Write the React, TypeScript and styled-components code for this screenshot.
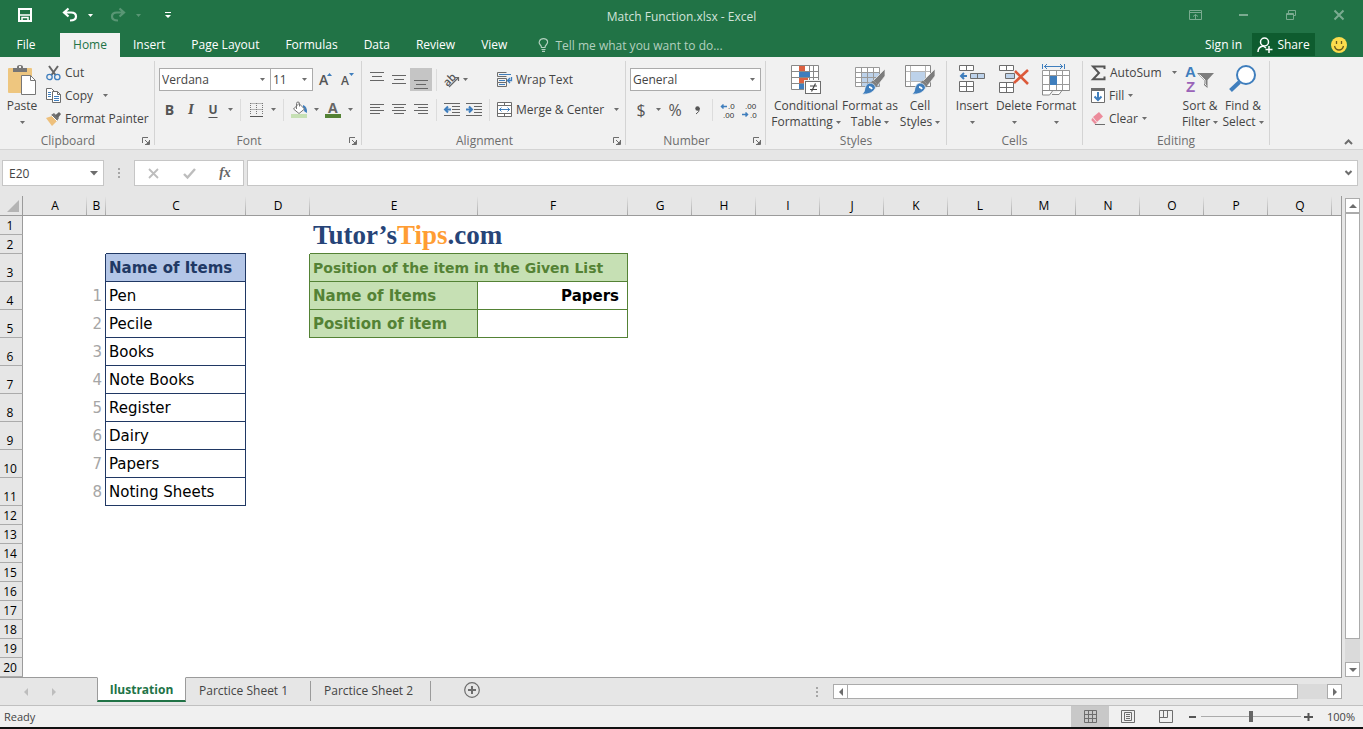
import React from "react";
import styled, { createGlobalStyle, css } from "styled-components";

const ui = `"Open Sans", "Noto Sans", sans-serif`;
const sheetFont = `"DejaVu Sans", Verdana, sans-serif`;
const c = {
  green: "#217346",
  ribbon: "#f1f1f1",
  frame: "#e6e6e6",
  line: "#d4d4d4",
  grey: "#6d6d6d",
  text: "#444444",
  edge: "#9b9b9b",
  box: "#ababab",
  blue: "#3f7ebd",
  navy: "#203864",
  leaf: "#548235",
};

const Global = createGlobalStyle`
  *, *::before, *::after { box-sizing: border-box; }
  body { margin: 0; background: ${c.frame}; font-family: ${ui}; font-size: 12px; color: ${c.text}; }
  button, input, select { font: inherit; color: inherit; margin: 0; padding: 0; border: 0; background: none; border-radius: 0; outline: 0; }
  svg { display: block; flex: none; overflow: visible; }
  h1, h2 { margin: 0; font: inherit; }
`;

const Page = styled.div`
  display: flex;
  flex-direction: column;
  min-height: 100vh;
`;

/* ---------- title bar and tabs ---------- */
const TitleBar = styled.header`
  display: grid;
  grid-template-columns: 1fr auto 1fr;
  height: 33px;
  background: ${c.green};
  color: #fff;
`;
const QuickAccess = styled.div`
  display: flex;
  align-items: center;
  height: 30px;
  padding-left: 14px;
`;
const QuickButton = styled.button<{ $w: number; $dim?: boolean }>`
  display: flex;
  align-items: center;
  justify-content: center;
  width: ${(p) => p.$w}px;
  height: 24px;
  opacity: ${(p) => (p.$dim ? 0.25 : 1)};
`;
const Gap = styled.span<{ $w: number }>`
  width: ${(p) => p.$w}px;
  flex: none;
`;
const DocTitle = styled.h1`
  line-height: 33px;
  color: #d3e3da;
`;
const WindowButtons = styled.div`
  display: flex;
  justify-content: flex-end;
`;
const WindowButton = styled.button`
  display: flex;
  align-items: center;
  justify-content: center;
  width: 48px;
  height: 30px;
  opacity: 0.4;
`;
const TabBar = styled.nav`
  display: flex;
  height: 24px;
  background: ${c.green};
  color: #fff;
`;
const Tab = styled.button<{ $on?: boolean; $file?: boolean }>`
  padding: 0 13px;
  line-height: 24px;
  white-space: nowrap;
  ${(p) => p.$file && css`width: 60px; padding: 0 8px 0 0;`}
  ${(p) => p.$on && css`width: 60px; padding: 0; background: ${c.ribbon}; color: ${c.green};`}
`;
const TellMe = styled.label`
  display: flex;
  align-items: center;
  gap: 6px;
  flex: 1;
  padding-left: 18px;
  color: #b3d0bf;
  input { width: 200px; height: 24px; }
  input::placeholder { color: #b3d0bf; opacity: 1; }
`;
const SignIn = styled.a`
  padding: 0 10px;
  line-height: 24px;
  color: #fff;
  text-decoration: none;
`;
const Share = styled.button`
  display: flex;
  align-items: center;
  justify-content: center;
  gap: 4px;
  width: 63px;
  height: 23px;
  background: #0e5c2f;
`;
const Smile = styled.button`
  display: flex;
  align-items: center;
  justify-content: center;
  width: 48px;
  height: 24px;
`;

/* ---------- ribbon ---------- */
const Ribbon = styled.section`
  display: flex;
  height: 93px;
  padding-top: 4px;
  background: ${c.ribbon};
  border-bottom: 1px solid ${c.line};
`;
const GroupBox = styled.div<{ $w: number }>`
  display: flex;
  flex-direction: column;
  flex: 0 0 ${(p) => p.$w}px;
  height: 84px;
  border-right: 1px solid ${c.line};
`;
const GroupBody = styled.div<{ $pad?: number }>`
  display: flex;
  flex: none;
  height: 74px;
  padding-left: ${(p) => p.$pad ?? 4}px;
`;
const GroupFoot = styled.div`
  display: flex;
  align-items: center;
  flex: none;
  height: 12px;
  line-height: 12px;
  color: ${c.grey};
  h2 { flex: 1; text-align: center; }
`;
const Launcher = styled.button`
  width: 18px;
  height: 8px;
  padding-left: 6px;
`;
const Stack = styled.div<{ $w?: number; $inset?: boolean }>`
  display: flex;
  flex-direction: column;
  flex: none;
  ${(p) => p.$w && css`width: ${p.$w}px;`}
  ${(p) => p.$inset && css`padding-left: 2px;`}
`;
const Line = styled.div<{ $h?: number; $top?: number }>`
  display: flex;
  align-items: center;
  height: ${(p) => p.$h ?? 31}px;
  margin-top: ${(p) => p.$top ?? 0}px;
`;
const BigButton = styled.button<{ $w: number }>`
  display: flex;
  flex-direction: column;
  align-items: center;
  width: ${(p) => p.$w}px;
  flex: none;
  padding-top: 3px;
  line-height: 16px;
  white-space: nowrap;
  svg.icon { height: 33px; margin-bottom: 1px; }
`;
const CaretLine = styled.span`
  display: flex;
  align-items: center;
  justify-content: center;
  gap: 3px;
  height: 16px;
`;
const SmallButton = styled.button`
  display: flex;
  align-items: center;
  gap: 4px;
  height: 23px;
  white-space: nowrap;
`;
const IconButton = styled.button<{ $w?: number; $on?: boolean }>`
  display: flex;
  align-items: center;
  justify-content: center;
  flex: none;
  width: ${(p) => p.$w ?? 22}px;
  height: 23px;
  background: ${(p) => (p.$on ? "#c5c5c5" : "none")};
`;
const Letter = styled.span<{ $s?: number; $kind?: string }>`
  font-size: ${(p) => p.$s ?? 14}px;
  line-height: 20px;
  color: #555;
  font-weight: ${(p) => (p.$kind === "plain" ? 400 : 700)};
  ${(p) => p.$kind === "i" && css`font-family: "DejaVu Serif", serif; font-style: italic;`}
  ${(p) => p.$kind === "u" && css`text-decoration: underline; text-underline-offset: 3px;`}
`;
const Rule = styled.span`
  width: 1px;
  height: 22px;
  margin: 0 4px;
  background: #dcdcdc;
  flex: none;
`;
const SelectWrap = styled.label<{ $w: number }>`
  position: relative;
  display: flex;
  align-items: center;
  width: ${(p) => p.$w}px;
  height: 23px;
  background: #fff;
  border: 1px solid ${c.box};
  & + & { margin-left: -1px; }
  select { appearance: none; width: 100%; height: 21px; padding-left: 2px; }
  svg { position: absolute; right: 5px; pointer-events: none; }
`;
const Collapse = styled.button`
  align-self: flex-end;
  margin-left: auto;
  padding: 0 10px 4px;
`;

/* ---------- formula bar ---------- */
const FormulaBar = styled.div`
  display: flex;
  align-items: center;
  height: 46px;
  padding: 0 5px 0 2px;
`;
const Field = styled.label<{ $w?: number }>`
  display: flex;
  align-items: center;
  min-width: 0;
  ${(p) => (p.$w ? css`flex: 0 0 ${p.$w}px;` : css`flex: 1 1 0;`)}
  height: 26px;
  padding: 0 5px 0 6px;
  background: #fff;
  border: 1px solid #c6c6c6;
  input { flex: 1 1 0; width: 0; min-width: 0; height: 24px; }
`;
const EntryButtons = styled.div`
  display: flex;
  align-items: center;
  flex: 0 0 110px;
  height: 26px;
  margin-right: 3px;
  background: #fff;
  border: 1px solid #c6c6c6;
`;
const EntryButton = styled.button`
  display: flex;
  align-items: center;
  justify-content: center;
  width: 36px;
  height: 24px;
  font: italic 700 14px "Liberation Serif", serif;
  color: #666;
`;
const Dots = styled.span<{ $w: number; $push?: boolean }>`
  display: flex;
  align-items: center;
  justify-content: center;
  width: ${(p) => p.$w}px;
  ${(p) => p.$push && css`margin-left: auto;`}
`;

/* ---------- sheet ---------- */
const SheetArea = styled.main`
  display: flex;
  flex: 1;
`;
const SheetPane = styled.div`
  flex: 1;
  min-width: 0;
  overflow: hidden;
`;
const Grid = styled.table`
  width: 100%;
  table-layout: fixed;
  border-collapse: separate;
  border-spacing: 0;
  background: #fff;
  color: #000;
  th, td { padding: 0; }
  border-right: 1px solid ${c.edge};
`;
const Col = styled.col<{ $w?: number }>`
  ${(p) => p.$w && css`width: ${p.$w}px;`}
`;
const ColHead = styled.th`
  height: 20px;
  background: linear-gradient(${c.frame}, #a8a8a8) right / 1px 100% no-repeat ${c.frame};
  border-bottom: 1px solid ${c.edge};
  font-weight: 400;
  line-height: 19px;
`;
const HeadFill = styled.td`
  background: ${c.frame};
  border-bottom: 1px solid ${c.edge};
`;
const Corner = styled.th`
  height: 20px;
  background: ${c.frame};
  border-bottom: 1px solid ${c.edge};
  border-right: 1px solid ${c.edge};
  svg { margin-left: 7px; }
`;
const RowHead = styled.th<{ $h: number }>`
  height: ${(p) => p.$h}px;
  background: ${c.frame};
  border-right: 1px solid ${c.edge};
  border-bottom: 1px solid #ababab;
  font-weight: 400;
  line-height: 16px;
  vertical-align: bottom;
  && { padding-right: 2px; }
  text-align: center;
`;
const Cell = styled.td<{ $edge?: string; $right?: string; $fill?: string; $ink?: string; $bold?: boolean; $align?: string; $size?: number }>`
  font-family: ${sheetFont};
  font-size: ${(p) => p.$size ?? 15}px;
  line-height: 18px;
  white-space: nowrap;
  overflow: hidden;
  && { padding: 0 8px 0 3px; }
  background: ${(p) => p.$fill ?? "#fff"};
  color: ${(p) => p.$ink ?? "#000"};
  font-weight: ${(p) => (p.$bold ? 700 : 400)};
  text-align: ${(p) => p.$align ?? "left"};
  ${(p) => p.$edge && css`border-bottom: 1px solid ${p.$edge};`}
  ${(p) => p.$right && css`border-right: 1px solid ${p.$right};`}
`;
const IndexCell = styled(Cell)`
  && { padding: 0 3px 0 0; }
`;
const Logo = styled.strong`
  display: block;
  height: 36px;
  font: 700 27px/36px "Liberation Serif", serif;
  color: #264478;
  em { font-style: normal; color: #ff9d33; }
`;
const VScroll = styled.div`
  display: flex;
  flex-direction: column;
  width: 15px;
  margin: 2px 3px 0;
  background: #dadada;
`;
const ScrollButton = styled.button`
  display: flex;
  align-items: center;
  justify-content: center;
  flex: none;
  width: 15px;
  height: 15px;
  background: #fff;
  border: 1px solid ${c.box};
`;
const VThumb = styled.div`
  flex: 1;
  margin-bottom: 23px;
  background: #fff;
  border: 1px solid ${c.box};
`;

/* ---------- sheet tabs ---------- */
const SheetTabs = styled.div`
  display: flex;
  height: 29px;
  border-bottom: 1px solid #c0c0c0;
`;
const TabStrip = styled.div`
  display: flex;
  flex: 1;
  margin-right: 21px;
  border-top: 1px solid ${c.edge};
`;
const NavButtons = styled.div`
  display: flex;
  align-items: center;
  width: 97px;
  padding-left: 12px;
`;
const SheetTab = styled.button<{ $on?: boolean; $w: number }>`
  width: ${(p) => p.$w}px;
  height: 25px;
  line-height: 24px;
  flex: none;
  white-space: nowrap;
  ${(p) =>
    p.$on
      ? css`
          margin-top: -1px;
          background: #fff;
          border: 1px solid ${c.edge};
          border-top-color: #fff;
          border-bottom: 2px solid ${c.green};
          color: ${c.green};
          font-weight: 700;
        `
      : css`
          background: linear-gradient(${c.edge}, ${c.edge}) right center / 1px 20px no-repeat;
          padding-left: 13px;
          text-align: left;
        `}
`;
const HScroll = styled.div`
  display: flex;
  flex: 0 0 509px;
  height: 15px;
  margin-top: 6px;
  background: #dadada;
`;
const HThumb = styled.div`
  flex: 1;
  margin-right: 29px;
  background: #fff;
  border: 1px solid ${c.box};
  border-left: 0;
`;

/* ---------- status bar ---------- */
const StatusBar = styled.footer`
  display: flex;
  align-items: center;
  height: 23px;
  padding: 0 8px 0 4px;
  font-size: 11px;
  line-height: 20px;
  background: #f0f0f0;
  border-bottom: 2px solid #111;
`;
const ViewButton = styled.button<{ $on?: boolean }>`
  display: flex;
  align-items: center;
  justify-content: center;
  width: 38px;
  height: 21px;
  background: ${(p) => (p.$on ? "#c8c8c8" : "none")};
`;
const Zoom = styled.div`
  display: flex;
  align-items: center;
  gap: 3px;
  margin-left: 4px;
  input {
    appearance: none;
    width: 100px;
    height: 12px;
    background: linear-gradient(${c.box}, ${c.box}) center / 100% 1px no-repeat;
  }
  input::-webkit-slider-thumb {
    appearance: none;
    width: 4px;
    height: 11px;
    background: #666;
  }
`;
const ZoomButton = styled.button`
  width: 9px;
  height: 12px;
`;
const Percent = styled.span`
  margin-left: auto;
`;
const StatusRight = styled.div`
  display: flex;
  align-items: center;
  width: 284px;
  margin-left: auto;
`;

/* ---------- icons ---------- */
const Caret = ({ color = c.grey }: { color?: string }) => (
  <svg width="5" height="3"><path d="M0 0h5L2.500 3z" fill={color} /></svg>
);
const Svg = ({ w, h, big, children }: { w: number; h: number; big?: boolean; children: React.ReactNode }) => (
  <svg width={w} height={h} className={big ? "icon" : undefined} viewBox={`0 0 ${w} ${h}`} fill="none">{children}</svg>
);
const LauncherIcon = () => (
  <Svg w={8} h={8}><path d="M.5 6V.5H6" stroke={c.grey} /><path d="M3 3l3 3M7.500 3v4.500H3" stroke={c.grey} /><path d="M7 4v3H4z" fill={c.grey} /></Svg>
);
const PasteIcon = () => (
  <Svg big w={28} h={33}>
    <rect x="0" y="4" width="24" height="25" rx="1" fill="#eec67f" />
    <path d="M5 8V4h4V3q0-2 3-2t3 2v1h4v4z" fill="#767676" /><rect x="11" y="2" width="2" height="2" fill="#f1f1f1" />
    <path d="M13.500 11.500h9l5 5v14h-14z" fill="#fff" stroke="#767676" /><path d="M22.500 11.500v5h5" stroke="#767676" />
  </Svg>
);
const CutIcon = () => (
  <Svg w={15} h={16}>
    <path d="M3 1l6.500 9M12 1L5.500 10" stroke="#666" strokeWidth="2" />
    <circle cx="3.500" cy="12" r="2.700" stroke={c.blue} strokeWidth="1.300" /><circle cx="11.300" cy="12" r="2.700" stroke={c.blue} strokeWidth="1.300" />
  </Svg>
);
const CopyIcon = () => (
  <Svg w={15} h={15}>
    <path d="M.5.5h5l3 3v8h-8z" fill="#fff" stroke={c.grey} /><path d="M2 4.500h3M2 6.500h3M2 8.500h3" stroke={c.blue} />
    <path d="M6.500 3.500h5l3 3v8h-8z" fill="#fff" stroke={c.grey} /><path d="M11.500 3.500v3h3" stroke={c.grey} /><path d="M8 8.500h5M8 10.500h5M8 12.500h5" stroke={c.blue} />
  </Svg>
);
const BrushIcon = () => (
  <Svg w={15} h={14}>
    <path d="M0 6l6-2 5 5-5 5z" fill="#eec07c" /><path d="M5 3l3-2 5 5-2 3z" fill="#767676" /><path d="M9 3.500L13 0l2 2-3 4z" fill="#666" /><path d="M5.500 3.500l5.500 5.500" stroke="#fff" />
  </Svg>
);
const GrowIcon = ({ small }: { small?: boolean }) => (
  <Svg w={14} h={18}>
    <text x="0" y="14" fontSize={small ? 12 : 14} fontWeight="600" fill="#555">A</text>
    <path d={small ? "M8 2h5l-2.500 3z" : "M8 5h5l-2.500-3z"} fill={c.blue} />
  </Svg>
);
const BordersIcon = () => (
  <Svg w={13} h={14}><path d="M.5.5h12M.5 6.500h12M.5 0v12M6.500 0v12M12.500 0v12" stroke="#777" strokeDasharray="1 1" /><path d="M0 13.500h13" stroke="#555" /></Svg>
);
const FillIcon = () => (
  <Svg w={16} h={16}>
    <path d="M12 3q4.500 1.500 4 8l-2.500-1.500L12 6z" fill={c.blue} /><path d="M8 1.500l5.500 5.500-5.500 4.500-5.500-4.500z" fill="#fff" stroke="#767676" /><path d="M5.500 7V1.500q0-1.500 1.500-1.500t1.500 1.500v3" stroke="#767676" />
    <rect y="12" width="16" height="4" fill="#c6e0b4" />
  </Svg>
);
const FontColorIcon = () => (
  <Svg w={16} h={16}><text x="3" y="11" fontSize="14" fontWeight="700" fill="#666">A</text><rect y="12" width="16" height="4" fill={c.leaf} /></Svg>
);
const Bars = ({ rows, h = 12 }: { rows: number[][]; h?: number }) => (
  <Svg w={14} h={h}>{rows.map(([x, y, w], i) => <path key={i} d={`M${x} ${y}.5h${w}`} stroke="#666" />)}</Svg>
);
const vert = (o: number) => [[0, o, 14], [2, o + 4, 10], [0, o + 8, 14]];
const OrientIcon = () => (
  <Svg w={18} h={16}><text x="0" y="12" fontSize="11" fill="#555" fontWeight="600" transform="rotate(-45 6 8)">ab</text><path d="M6 15L15.500 5.500M12 5.500h3.500V9" stroke="#666" strokeWidth="1.200" /></Svg>
);
const IndentIcon = ({ right }: { right?: boolean }) => (
  <Svg w={16} h={13}>
    <path d="M0 .5h16M8 3.500h8M8 6.500h8M8 9.500h8M0 12.500h16" stroke="#666" />
    <path d={right ? "M0 6.500h6M3 3.500l3 3-3 3" : "M1 6.500h6M4 3.500l-3 3 3 3"} stroke={c.blue} strokeWidth="2" />
  </Svg>
);
const WrapIcon = () => (
  <Svg w={15} h={16}>
    <path d="M9.500.5h-9v4h9M.5 6.500h9v4h-9zM.5 10.500v4h9v-4" stroke={c.grey} /><path d="M2 2.500h12M2 8.500h6M2 12.500h6" stroke={c.blue} />
    <path d="M14.500 5v3.500H11M13 6l-2.500 2.500L13 11" stroke={c.blue} strokeWidth="1.300" />
  </Svg>
);
const MergeIcon = () => (
  <Svg w={15} h={15}><path d="M.5.5h14v14H.5zM.5 3.500h14M.5 11.500h14M7.500.5v3M7.500 11.500v3" stroke={c.grey} fill="#fff" /><path d="M2 7.500h11M4.500 5.500l-2 2 2 2M10.500 5.500l2 2-2 2" stroke={c.blue} /></Svg>
);
const DecimalIcon = ({ less }: { less?: boolean }) => (
  <Svg w={16} h={16}>
    <text x={less ? 3 : 8} y="7" fontSize="8" fontFamily="Liberation Sans" fill="#333">{less ? ".00" : ".0"}</text>
    <text x={less ? 8 : 3} y="16" fontSize="8" fontFamily="Liberation Sans" fill="#333">{less ? ".0" : ".00"}</text>
    <path d={less ? "M0 12.500h6M3.500 10.500l2 2-2 2" : "M1 4.500h6M3.500 2.500l-2 2 2 2"} stroke={c.blue} strokeWidth="1.500" />
  </Svg>
);
const CondIcon = () => (
  <Svg big w={30} h={33}>
    <path d="M.5 1.500h27v24H.5zM.5 7.500h27M.5 13.500h27M.5 19.500h27M8.500 1.500v24M18.500 1.500v24M22.500 1.500v24" stroke="#888" fill="#fff" />
    <rect x="8" y="2" width="6" height="5" fill="#dc6141" /><rect x="8" y="8" width="11" height="5" fill={c.blue} /><rect x="8" y="14" width="9" height="5" fill="#dc6141" /><rect x="8" y="20" width="5" height="5" fill={c.blue} />
    <rect x="13" y="16" width="17" height="15" fill="#f1f1f1" /><rect x="14.500" y="17.500" width="15" height="12" fill="#fff" stroke={c.grey} /><path d="M19 22h7M19 25.500h7M24.500 19.500l-4 8" stroke="#444" strokeWidth="1.200" />
  </Svg>
);
const PaintBrush = () => (
  <><path d="M30 5v7l-7 9-5-4z" fill="#7d7d7d" stroke="#f1f1f1" strokeWidth=".7" /><path d="M18 16.500l5 4-2 3-6-4.500z" fill="#7d7d7d" /><path d="M14 19q6 0 6.500 5Q17 31 7 30q3-2 3-6 1-4 4-5z" fill={c.blue} stroke="#f1f1f1" strokeWidth=".7" /><path d="M14 23q2 0 3 2" stroke="#fff" strokeWidth="2" /></>
);
const TableIcon = () => (
  <Svg big w={30} h={33}>
    <rect x=".5" y="3.500" width="24" height="19" fill="#fff" /><rect x="6" y="8" width="18" height="15" fill="#bdd2ea" />
    <path d="M.5 3.500h24v19H.5zM.5 8.500h24M.5 13.500h24M.5 18.500h24M6.500 3.500v19M12.500 3.500v19M18.500 3.500v19" stroke="#999" /><PaintBrush />
  </Svg>
);
const CellIcon = () => (
  <Svg big w={30} h={33}>
    <rect x=".5" y="1.500" width="25" height="21" fill="#fff" /><path d="M.5 7.500h25M.5 17.500h25M5.500 1.500v21M20.500 1.500v21" stroke="#b5b5b5" /><path d="M.5 1.500h25v21H.5z" stroke="#888" /><rect x="6" y="8" width="14" height="9" fill="#bdd2ea" /><PaintBrush />
  </Svg>
);
const InsertIcon = () => (
  <Svg big w={26} h={33}>
    <path d="M.5 1.500h14v5H.5zM7.500 1.500v5M.5 17.500h14v10H.5zM.5 22.500h14M7.500 17.500v10" stroke={c.grey} fill="#fff" /><path d="M11.500 9.500h14v5h-14zM18.500 9.500v5" stroke={c.grey} fill="#bdd2ea" /><path d="M2 12h6M5 9l-3 3 3 3" stroke={c.blue} strokeWidth="2" />
  </Svg>
);
const DeleteIcon = () => (
  <Svg big w={30} h={33}>
    <path d="M.5 1.500h14v5H.5zM7.500 1.500v5M.5 18.500h14v10H.5zM.5 23.500h14M7.500 18.500v10" stroke={c.grey} fill="#fff" /><path d="M6.500 9.500h9v5h-9z" stroke={c.grey} fill="#bdd2ea" /><path d="M16 7l13 13M29 6L15 19" stroke="#dc5a3a" strokeWidth="2.600" />
  </Svg>
);
const FormatIcon = () => (
  <Svg big w={28} h={33}>
    <path d="M.5 0v5M22.500 0v5M2 2.500h19M5 0L2.500 2.500 5 5M18 0l2.500 2.500L18 5" stroke={c.blue} />
    <path d="M.5 6.500h27v20H.5zM.5 11.500h27M.5 20.500h27M7.500 6.500v20M14.500 6.500v20M20.500 6.500v20" stroke="#999" fill="#fff" /><rect x="8" y="12" width="7" height="9" fill={c.blue} /><path d="M0 26.500h27.500M.5 26v5h7l3-4M10 30.500h7l3-4" stroke="#888" fill="#fff" />
  </Svg>
);
const SumIcon = () => <Svg w={15} h={16}><path d="M13.500 4V1.500H2L8 8l-6 6.200h11.500V11.500" stroke="#555" strokeWidth="2" /></Svg>;
const DownIcon = () => (
  <Svg w={14} h={15}><path d="M.5.5h13v14H.5z" fill="#fff" stroke={c.grey} /><rect width="14" height="3" fill={c.grey} /><path d="M7 4v8M3.500 8.500L7 12l3.500-3.500" stroke={c.blue} strokeWidth="2" /></Svg>
);
const EraserIcon = () => (
  <Svg w={14} h={14}><path d="M8 0l4 4.500-6 5.500-4-5z" fill="#ec8b9b" /><path d="M1.500 5.500L6 10.500 4 12.500 0 8z" fill="#ec8b9b" stroke="#f1f1f1" strokeWidth=".5" /><path d="M4 12.500h10" stroke={c.grey} /></Svg>
);
const SortIcon = () => (
  <Svg big w={30} h={33}>
    <text x="0" y="13" fontSize="15" fontWeight="700" fontFamily="Liberation Sans" fill={c.blue}>A</text><text x="1" y="28" fontSize="15" fontWeight="700" fontFamily="Liberation Sans" fill="#9a63b8">Z</text>
    <path d="M12 9h17l-6.500 7v8l-3.500-3v-5z" fill="#7d7d7d" /><path d="M14.500 10.500l5.500 5.500v4l1.500 1.500" stroke="#f1f1f1" />
  </Svg>
);
const FindIcon = () => (
  <Svg big w={28} h={33}><circle cx="17" cy="11" r="9" fill="#fff" stroke={c.blue} strokeWidth="2" /><path d="M10.500 18L1.500 26.500" stroke={c.blue} strokeWidth="4" /></Svg>
);
const Arrow = ({ d, color = c.grey }: { d: string; color?: string }) => <svg width="8" height="8"><path d={d} fill={color} /></svg>;
const DotsIcon = () => <svg width="2" height="10"><path d="M0 0h2v2H0zM0 4h2v2H0zM0 8h2v2H0z" fill="#a6a6a6" /></svg>;
const UndoIcon = ({ flip }: { flip?: boolean }) => (
  <svg width="16" height="14" fill="none"><g transform={flip ? "translate(16 0) scale(-1 1)" : undefined}><path d="M1.500 4.500H9q5 0 5 4t-6 4M6.500.5l-4.500 4 4.500 4" stroke="#fff" strokeWidth="2.200" /></g></svg>
);

/* ---------- content ---------- */
const Group = ({ w, name, pad, launcher, children }: { w: number; name: string; pad?: number; launcher?: boolean; children: React.ReactNode }) => (
  <GroupBox $w={w}>
    <GroupBody $pad={pad}>{children}</GroupBody>
    <GroupFoot><h2>{name}</h2>{launcher && <Launcher aria-label={`${name} settings`}><LauncherIcon /></Launcher>}</GroupFoot>
  </GroupBox>
);
const Big = ({ w, icon, top, bottom }: { w: number; icon: React.ReactNode; top: string; bottom?: string }) => (
  <BigButton $w={w}>{icon}<span>{top}</span><CaretLine>{bottom}<Caret /></CaretLine></BigButton>
);
const Select = ({ w, label, value }: { w: number; label: string; value: string }) => (
  <SelectWrap $w={w}><select aria-label={label} defaultValue={value}><option>{value}</option></select><Caret /></SelectWrap>
);

const columns: [string, number][] = [["A", 64], ["B", 19], ["C", 140], ["D", 64], ["E", 168], ["F", 150], ..."GHIJKLMNOPQ".split("").map((l): [string, number] => [l, 64])];
const items = ["Pen", "Pecile", "Books", "Note Books", "Register", "Dairy", "Papers", "Noting Sheets"];

const SheetRow = ({ n }: { n: number }) => {
  const listed = n >= 3 && n <= 11;
  const head = n === 3;
  return (
    <tr>
      <RowHead $h={listed ? 28 : 19} scope="row">{n}</RowHead>
      <Cell />
      <IndexCell $right={listed ? c.navy : undefined} $ink="#a6a6a6" $align="right">{n >= 4 && listed ? n - 3 : ""}</IndexCell>
      <Cell $edge={listed || n === 2 ? c.navy : undefined} $right={listed ? c.navy : undefined} $fill={head ? "#b4c6e7" : undefined} $ink={head ? c.navy : undefined} $bold={head}>
        {head ? "Name of Items" : listed ? items[n - 4] : ""}
      </Cell>
      <Cell $right={n >= 3 && n <= 5 ? c.leaf : undefined} />
      {n === 1 && <Cell colSpan={2} rowSpan={2} $edge={c.leaf}><Logo>Tutor’s<em>Tips</em>.com</Logo></Cell>}
      {n === 3 && <Cell colSpan={2} $edge={c.leaf} $right={c.leaf} $fill="#c6e0b4" $ink={c.leaf} $bold $size={14}>Position of the item in the Given List</Cell>}
      {(n === 4 || n === 5) && (
        <>
          <Cell $edge={c.leaf} $right={c.leaf} $fill="#c6e0b4" $ink={c.leaf} $bold>{n === 4 ? "Name of Items" : "Position of item"}</Cell>
          <Cell $edge={c.leaf} $right={c.leaf} $bold $align="right">{n === 4 ? "Papers" : ""}</Cell>
        </>
      )}
      {n > 5 && <Cell colSpan={2} />}
      <Cell colSpan={12} />
    </tr>
  );
};

export default function App() {
  return (
    <Page>
      <Global />
      <TitleBar>
        <QuickAccess>
          <QuickButton $w={22} aria-label="Save"><Svg w={14} h={14}><path d="M1 1h12v12H1z" stroke="#fff" strokeWidth="2" /><path d="M1 7h12M4 13V9.500h6V13" stroke="#fff" strokeWidth="1.500" /></Svg></QuickButton>
          <Gap $w={22} />
          <QuickButton $w={24} aria-label="Undo"><UndoIcon /></QuickButton>
          <QuickButton $w={16} aria-label="Undo list"><Caret color="#fff" /></QuickButton>
          <Gap $w={8} />
          <QuickButton $w={24} $dim aria-label="Redo"><UndoIcon flip /></QuickButton>
          <QuickButton $w={16} $dim aria-label="Redo list"><Caret color="#fff" /></QuickButton>
          <Gap $w={14} />
          <QuickButton $w={16} aria-label="Customize toolbar"><svg width="6" height="6"><path d="M0 0h6v1H0zM0 3h6L3 6z" fill="#fff" /></svg></QuickButton>
        </QuickAccess>
        <DocTitle>Match Function.xlsx - Excel</DocTitle>
        <WindowButtons>
          <WindowButton aria-label="Ribbon display"><Svg w={13} h={10}><path d="M.5.5h12v9H.5zM.5 2.500h12M6.500 9V4.500M4 6.500l2.500-2 2.500 2" stroke="#fff" /></Svg></WindowButton>
          <WindowButton aria-label="Minimize"><svg width="9" height="2"><path d="M0 0h9v2H0z" fill="#fff" /></svg></WindowButton>
          <WindowButton aria-label="Restore"><Svg w={10} h={10}><path d="M2.500 3V.5h7v5H8M.5 3.500h7v6h-7zM.5 4.500h7" stroke="#fff" /></Svg></WindowButton>
          <WindowButton aria-label="Close"><Svg w={10} h={10}><path d="M.5.5l9 9M9.500.5l-9 9" stroke="#fff" strokeWidth="2" /></Svg></WindowButton>
        </WindowButtons>
      </TitleBar>
      <TabBar>
        <Tab $file>File</Tab>
        <Tab $on>Home</Tab>
        {["Insert", "Page Layout", "Formulas", "Data", "Review", "View"].map((t) => <Tab key={t}>{t}</Tab>)}
        <TellMe>
          <Svg w={11} h={14}><path d="M3.500 9.500q0-1.500-1.500-3T1.500 3Q2.500.7 5.500.7T9.500 3q.5 2-1 3.500t-1.500 3zM3.500 11.500h4M4 13.300h3" stroke="#b3d0bf" strokeWidth="1.200" /></Svg>
          <input placeholder="Tell me what you want to do..." aria-label="Tell me what you want to do" />
        </TellMe>
        <SignIn href="#signin">Sign in</SignIn>
        <Share>
          <Svg w={16} h={16}><circle cx="7.500" cy="5" r="4" stroke="#fff" strokeWidth="1.500" /><path d="M1 15q0-5 5-6l3 2M12 9v7M8.500 12.500h7" stroke="#fff" strokeWidth="1.500" /></Svg>
          Share
        </Share>
        <Smile aria-label="Feedback"><Svg w={16} h={16}><circle cx="8" cy="8" r="8" fill="#fcdc4d" /><path d="M5.500 4v3M10.500 4v3M3.500 9q1 4 4.500 4t4.500-4" stroke="#6b5a1c" strokeWidth="1.300" /></Svg></Smile>
      </TabBar>

      <Ribbon>
        <Group w={155} name="Clipboard" pad={0} launcher>
          <Big w={44} icon={<PasteIcon />} top="Paste" />
          <Stack $inset>
            <SmallButton><CutIcon />Cut</SmallButton>
            <SmallButton><CopyIcon />Copy<Gap $w={2} /><Caret /></SmallButton>
            <SmallButton><BrushIcon />Format Painter</SmallButton>
          </Stack>
        </Group>
        <Group w={207} name="Font" launcher>
          <Stack>
            <Line $h={23} $top={7}>
              <Select w={112} label="Font" value="Verdana" />
              <Select w={43} label="Font size" value="11" />
              <Gap $w={2} />
              <IconButton aria-label="Increase font size"><GrowIcon /></IconButton>
              <IconButton aria-label="Decrease font size"><GrowIcon small /></IconButton>
            </Line>
            <Line $top={3}>
              <IconButton $w={21} aria-label="Bold"><Letter>B</Letter></IconButton>
              <IconButton aria-label="Italic"><Letter $s={12} $kind="i">I</Letter></IconButton>
              <IconButton aria-label="Underline"><Letter $kind="u" $s={12}>U</Letter></IconButton>
              <IconButton $w={12} aria-label="Underline style"><Caret /></IconButton>
              <Rule />
              <IconButton aria-label="Borders"><BordersIcon /></IconButton>
              <IconButton $w={12} aria-label="Border style"><Caret /></IconButton>
              <Rule />
              <IconButton aria-label="Fill colour"><FillIcon /></IconButton>
              <IconButton $w={12} aria-label="Fill colours"><Caret /></IconButton>
              <IconButton aria-label="Font colour"><FontColorIcon /></IconButton>
              <IconButton $w={12} aria-label="Font colours"><Caret /></IconButton>
            </Line>
          </Stack>
        </Group>
        <Group w={264} name="Alignment" launcher>
          <Stack $w={129}>
            <Line $h={23} $top={7}>
              <IconButton aria-label="Top align"><Bars h={18} rows={vert(1)} /></IconButton>
              <IconButton aria-label="Middle align"><Bars h={9} rows={vert(0)} /></IconButton>
              <IconButton $on aria-label="Bottom align"><Bars h={18} rows={vert(9)} /></IconButton>
              <Rule />
              <IconButton $w={22} aria-label="Orientation"><OrientIcon /></IconButton>
              <Caret />
            </Line>
            <Line $top={3}>
              <IconButton aria-label="Align left"><Bars h={11} rows={[[0, 0, 14], [0, 3, 10], [0, 6, 14], [0, 9, 10]]} /></IconButton>
              <IconButton aria-label="Center"><Bars h={11} rows={[[0, 0, 14], [2, 3, 10], [0, 6, 14], [2, 9, 10]]} /></IconButton>
              <IconButton aria-label="Align right"><Bars h={11} rows={[[0, 0, 14], [4, 3, 10], [0, 6, 14], [4, 9, 10]]} /></IconButton>
              <Rule />
              <IconButton aria-label="Decrease indent"><IndentIcon /></IconButton>
              <IconButton aria-label="Increase indent"><IndentIcon right /></IconButton>
              <Rule />
            </Line>
          </Stack>
          <Stack $inset>
            <Line $h={23} $top={7}><SmallButton><WrapIcon />Wrap Text</SmallButton></Line>
            <Line $top={3}><SmallButton><MergeIcon />Merge &amp; Center<Gap $w={2} /><Caret /></SmallButton></Line>
          </Stack>
        </Group>
        <Group w={140} name="Number" launcher>
          <Stack>
            <Line $h={23} $top={7}><Select w={131} label="Number format" value="General" /></Line>
            <Line $top={3}>
              <IconButton aria-label="Currency"><Letter $s={16} $kind="plain">$</Letter></IconButton>
              <IconButton $w={12} aria-label="Currencies"><Caret /></IconButton>
              <IconButton aria-label="Percent"><Letter $s={16} $kind="plain">%</Letter></IconButton>
              <IconButton aria-label="Comma style"><Svg w={5} h={8}><circle cx="2.500" cy="2.500" r="2.200" fill="#555" /><path d="M4.300 2q.5 4-3.300 6" stroke="#555" /></Svg></IconButton>
              <Rule />
              <IconButton aria-label="Increase decimal"><DecimalIcon /></IconButton>
              <IconButton aria-label="Decrease decimal"><DecimalIcon less /></IconButton>
            </Line>
          </Stack>
        </Group>
        <Group w={181} name="Styles">
          <Big w={72} icon={<CondIcon />} top="Conditional" bottom="Formatting" />
          <Big w={56} icon={<TableIcon />} top="Format as" bottom="Table" />
          <Big w={44} icon={<CellIcon />} top="Cell" bottom="Styles" />
        </Group>
        <Group w={136} name="Cells">
          <Big w={42} icon={<InsertIcon />} top="Insert" />
          <Big w={42} icon={<DeleteIcon />} top="Delete" />
          <Big w={42} icon={<FormatIcon />} top="Format" />
        </Group>
        <Group w={187} name="Editing" pad={8}>
          <Stack $w={87}>
            <SmallButton><SumIcon />AutoSum<Gap $w={2} /><Caret /></SmallButton>
            <SmallButton><DownIcon />Fill<Caret /></SmallButton>
            <SmallButton><EraserIcon />Clear<Caret /></SmallButton>
          </Stack>
          <Big w={44} icon={<SortIcon />} top="Sort &amp;" bottom="Filter" />
          <Big w={42} icon={<FindIcon />} top="Find &amp;" bottom="Select" />
        </Group>
        <Collapse aria-label="Collapse ribbon"><Svg w={9} h={6}><path d="M1 5l3.500-3.500L8 5" stroke={c.grey} strokeWidth="2" /></Svg></Collapse>
      </Ribbon>

      <FormulaBar>
        <Field $w={102}>
          <input aria-label="Name box" defaultValue="E20" />
          <svg width="8" height="5"><path d="M0 0h8L4 4.500z" fill={c.grey} /></svg>
        </Field>
        <Dots $w={30}><DotsIcon /></Dots>
        <EntryButtons>
          <EntryButton aria-label="Cancel"><Svg w={11} h={11}><path d="M1 1l9 9M10 1l-9 9" stroke="#bdbdbd" strokeWidth="1.800" /></Svg></EntryButton>
          <EntryButton aria-label="Enter"><Svg w={13} h={11}><path d="M1 6l3.500 3.500L12 1" stroke="#bdbdbd" strokeWidth="2.400" /></Svg></EntryButton>
          <EntryButton aria-label="Insert function">fx</EntryButton>
        </EntryButtons>
        <Field>
          <input aria-label="Formula" />
          <Svg w={7} h={6}><path d="M.5 1l3 3 3-3" stroke={c.grey} strokeWidth="2" /></Svg>
        </Field>
      </FormulaBar>

      <SheetArea>
        <SheetPane>
          <Grid>
            <colgroup>
              <Col $w={23} />
              {columns.map(([l, w]) => <Col key={l} $w={w} />)}
              <Col />
            </colgroup>
            <thead>
              <tr>
                <Corner aria-label="Select all"><svg width="12" height="12"><path d="M12 0v12H0z" fill="#b4b4b4" /></svg></Corner>
                {columns.map(([l]) => <ColHead key={l} scope="col">{l}</ColHead>)}
                <HeadFill />
              </tr>
            </thead>
            <tbody>{Array.from({ length: 20 }, (_, i) => <SheetRow key={i} n={i + 1} />)}</tbody>
          </Grid>
        </SheetPane>
        <VScroll>
          <ScrollButton aria-label="Scroll up"><Arrow d="M0 6h8L4 2z" /></ScrollButton>
          <VThumb />
          <ScrollButton aria-label="Scroll down"><Arrow d="M0 2h8L4 6z" /></ScrollButton>
        </VScroll>
      </SheetArea>

      <SheetTabs>
        <TabStrip>
          <NavButtons>
            <IconButton $w={28} aria-label="Previous sheet"><Arrow color="#bdbdbd" d="M6 0v8L2 4z" /></IconButton>
            <IconButton $w={28} aria-label="Next sheet"><Arrow color="#bdbdbd" d="M2 0v8l4-4z" /></IconButton>
          </NavButtons>
          <SheetTab $on $w={89}>Ilustration</SheetTab>
          <SheetTab $w={125}>Parctice Sheet 1</SheetTab>
          <SheetTab $w={120}>Parctice Sheet 2</SheetTab>
          <Gap $w={30} />
          <IconButton aria-label="New sheet"><Svg w={16} h={16}><circle cx="8" cy="8" r="7.300" stroke={c.grey} strokeWidth="1.200" /><path d="M8 4v8M4 8h8" stroke={c.grey} strokeWidth="2" /></Svg></IconButton>
          <Dots $w={32} $push><DotsIcon /></Dots>
          <HScroll>
            <ScrollButton aria-label="Scroll left"><Arrow d="M6 0v8L2 4z" /></ScrollButton>
            <HThumb />
            <ScrollButton aria-label="Scroll right"><Arrow d="M2 0v8l4-4z" /></ScrollButton>
          </HScroll>
        </TabStrip>
      </SheetTabs>

      <StatusBar>
        <span>Ready</span>
        <StatusRight>
          <ViewButton $on aria-label="Normal view"><Svg w={13} h={13}><path d="M.5.5h12v12H.5zM4.500.5v12M8.500.5v12M.5 4.500h12M.5 8.500h12" stroke={c.grey} /></Svg></ViewButton>
          <ViewButton aria-label="Page layout view"><Svg w={14} h={13}><path d="M.5.5h13v12H.5zM3.500 2.500h7v8h-7zM5 4.500h4M5 6.500h4M5 8.500h4" stroke={c.grey} /></Svg></ViewButton>
          <ViewButton aria-label="Page break view"><Svg w={14} h={13}><path d="M.5.5h13v12H.5zM.5 7.500h8V.5M4.500.5v7" stroke={c.grey} /></Svg></ViewButton>
          <Zoom>
            <ZoomButton aria-label="Zoom out"><svg width="7" height="12"><path d="M0 5h7v2H0z" fill="#555" /></svg></ZoomButton>
            <input type="range" aria-label="Zoom" />
            <ZoomButton aria-label="Zoom in"><svg width="9" height="12"><path d="M0 5h9v2H0zM3.500 2h2v8h-2z" fill="#555" /></svg></ZoomButton>
          </Zoom>
          <Percent>100%</Percent>
        </StatusRight>
      </StatusBar>
    </Page>
  );
}
